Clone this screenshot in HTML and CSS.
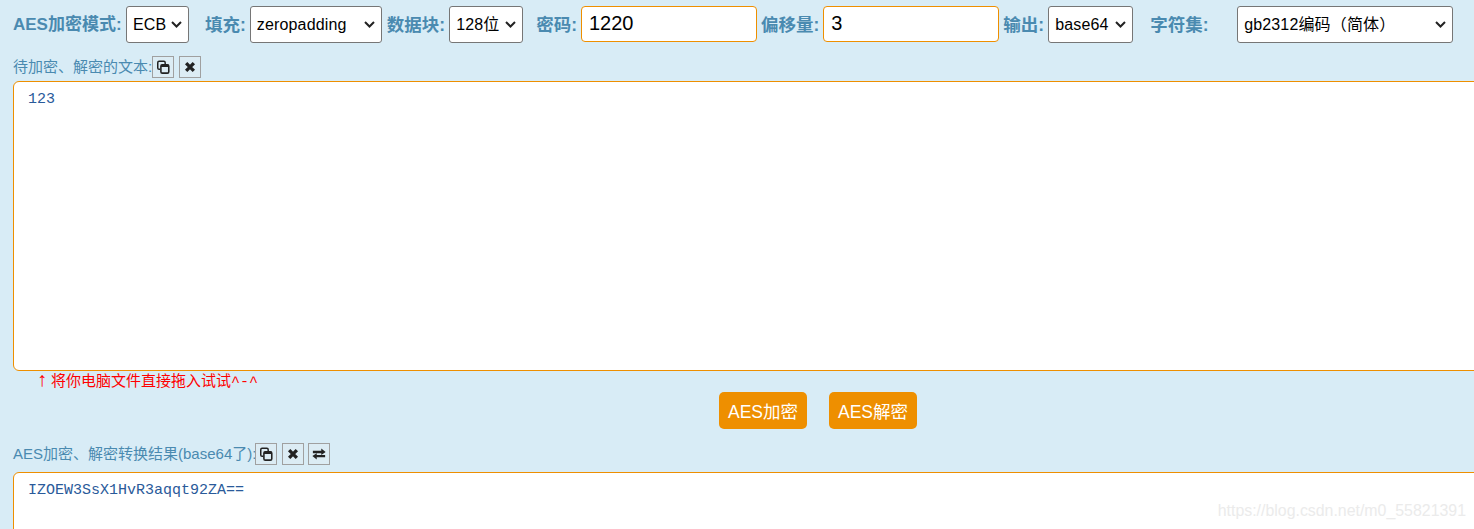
FILE: index.html
```html
<!DOCTYPE html>
<html lang="zh-CN">
<head>
  <meta charset="UTF-8" />
  <title>AES加密</title>
  <link rel="stylesheet" href="styles.css">
</head>
<body>

  <!-- Options -->
  <div class="options">
    <label class="opt-label mode-label">AES加密模式:</label>
    <select class="opt-select mode"><option>ECB</option></select>
    <label class="opt-label gap-l">填充:</label>
    <select class="opt-select padding"><option>zeropadding</option></select>
    <label class="opt-label gap-s">数据块:</label>
    <select class="opt-select block"><option>128位</option></select>
    <label class="opt-label gap-m">密码:</label>
    <input class="opt-input" type="text" value="1220" />
    <label class="opt-label">偏移量:</label>
    <input class="opt-input" type="text" value="3" />
    <label class="opt-label">输出:</label>
    <select class="opt-select output"><option>base64</option></select>
    <label class="opt-label gap-l charset-label">字符集:</label>
    <select class="opt-select charset"><option>gb2312编码（简体）</option></select>
  </div>

  <!-- Source text -->
  <div class="field-head">
    <span>待加密、解密的文本:</span>
    <button class="tool-btn">
      <svg viewBox="0 0 16 16"><use href="#icon-copy" /></svg>
    </button>
    <button class="tool-btn">
      <svg viewBox="0 0 16 16"><use href="#icon-clear" /></svg>
    </button>
  </div>
  <textarea class="text-box source">123</textarea>
  <p class="hint"><span class="hint-arrow">↑</span>将你电脑文件直接拖入试试<span class="hint-face">^-^</span></p>

  <div class="actions">
    <button class="action-btn">AES加密</button>
    <button class="action-btn">AES解密</button>
  </div>

  <!-- Result -->
  <div class="field-head">
    <span class="result-title">AES加密、解密转换结果(base64了):</span>
    <button class="tool-btn">
      <svg viewBox="0 0 16 16"><use href="#icon-copy" /></svg>
    </button>
    <button class="tool-btn">
      <svg viewBox="0 0 16 16"><use href="#icon-clear" /></svg>
    </button>
    <button class="tool-btn">
      <svg viewBox="0 0 16 16"><use href="#icon-swap" /></svg>
    </button>
  </div>
  <textarea class="text-box result">IZOEW3SsX1HvR3aqqt92ZA==</textarea>

  <div class="watermark">https://blog.csdn.net/m0_55821391</div>

  <svg class="icon-defs" width="0" height="0">
    <symbol id="icon-copy" viewBox="0 0 16 16">
      <path d="M5 10.5 H3.5 Q2 10.5 2 9 V3 Q2 1.5 3.5 1.5 H9 Q10.5 1.5 10.5 3 V4.5" fill="none" stroke="#222" stroke-width="1.7" />
      <rect x="5.6" y="5.4" width="9" height="9.6" rx="1.6" fill="none" stroke="#222" stroke-width="1.8" />
      <rect x="5.6" y="5.4" width="9" height="2.6" fill="#222" />
    </symbol>
    <symbol id="icon-clear" viewBox="0 0 16 16">
      <path d="M3.6 3.6 L12.4 12.4 M12.4 3.6 L3.6 12.4" fill="none" stroke="#222" stroke-width="3.8" />
    </symbol>
    <symbol id="icon-swap" viewBox="0 0 16 16">
      <path d="M1 4.4 H10.6 V1.8 L15.6 5.8 L10.6 9 V7 H1 Z M15 9 H5.4 V7 L0.4 10.4 L5.4 14.2 V11.6 H15 Z" fill="#222" />
    </symbol>
  </svg>

</body>
</html>
```

FILE: styles.css
```css
*, *::before, *::after {
  box-sizing: border-box;
}

:root {
  --color-bg: #d8ecf6;
  --color-label: #4a8ab0;
  --color-orange: #ee8f00;
  --color-code: #2a5a9a;
}

html, body {
  margin: 0;
  padding: 0;
  height: 529px;
  overflow: hidden;
  background-color: var(--color-bg);
  font-family: "Liberation Sans", "Noto Sans CJK SC", sans-serif;
}

body {
  position: relative;
}

.options {
  display: flex;
  align-items: flex-start;
  gap: 4px;
  padding: 6px 0 0 13px;
  height: 56px;
}

.opt-label {
  font-size: 17.5px;
  font-weight: 700;
  line-height: 38px;
  white-space: nowrap;
  color: var(--color-label);
}

.mode-label {
  width: 109px;
  font-size: 17px;
}

.gap-l {
  margin-left: 12px;
}

.gap-m {
  margin-left: 9px;
}

.gap-s {
  margin-left: 1px;
}

.charset-label {
  width: 83px;
  margin-left: 13px;
}

.opt-select {
  appearance: none;
  height: 37px;
  font-family: inherit;
  font-size: 16px;
  letter-spacing: 0.15px;
  padding: 0 20px 0 6px;
  color: #000;
  background: #fff url("data:image/svg+xml,%3Csvg xmlns='http://www.w3.org/2000/svg' width='11' height='7'%3E%3Cpath d='M1 1 L5.5 5.5 L10 1' fill='none' stroke='%23222' stroke-width='2'/%3E%3C/svg%3E") no-repeat right 6px center;
  border: 1px solid #767676;
  border-radius: 3px;
}

.mode { width: 63px; }
.padding { width: 132px; }
.block { width: 74px; }
.output { width: 85px; }
.charset { width: 216px; }

.opt-input {
  width: 176px;
  height: 36px;
  padding: 0 7px 2px;
  font-family: inherit;
  font-size: 20px;
  color: #000;
  background-color: #fff;
  border: 1px solid var(--color-orange);
  border-radius: 4px;
}

.field-head {
  display: flex;
  align-items: flex-start;
  height: 23px;
  padding-left: 13px;
  font-size: 15px;
  line-height: 22px;
  color: var(--color-label);
  white-space: nowrap;
}

.result-title {
  margin-right: -1px;
}

.tool-btn {
  width: 22px;
  height: 22px;
  padding: 0;
  margin-right: 4.5px;
  display: flex;
  align-items: center;
  justify-content: center;
  background-color: #dcecf4;
  border: 1px solid #a0a0a0;
}

.tool-btn svg {
  width: 14px;
  height: 14px;
}

.icon-defs {
  position: absolute;
}

.text-box {
  display: block;
  width: 1520px;
  margin: 2px 0 0 13px;
  padding: 8px 14px;
  font-family: "Liberation Mono", monospace;
  font-size: 15px;
  line-height: 20px;
  color: var(--color-code);
  background-color: #fff;
  border: 1px solid var(--color-orange);
  border-radius: 6px;
  resize: none;
  outline: none;
}

.source {
  height: 290px;
}

.result {
  height: 120px;
  margin-top: 6px;
}

.hint {
  margin: 0;
  padding-left: 37px;
  height: 21px;
  font-size: 15px;
  line-height: 19px;
  color: #ff0000;
  white-space: nowrap;
}

.hint-arrow {
  display: inline-block;
  width: 14px;
  font-size: 20px;
  line-height: 16px;
}

.hint-face {
  font-family: "Liberation Mono", monospace;
}

.actions {
  display: flex;
  justify-content: center;
  gap: 22px;
  height: 51px;
  padding-left: 162px;
}

.action-btn {
  width: 88px;
  height: 37px;
  padding: 0;
  font-family: inherit;
  font-size: 17.5px;
  color: #fff;
  background-color: var(--color-orange);
  border: none;
  border-radius: 5px;
}

.watermark {
  position: absolute;
  right: 8px;
  top: 502px;
  font-size: 15.9px;
  color: #ebebeb;
  white-space: nowrap;
}
```
